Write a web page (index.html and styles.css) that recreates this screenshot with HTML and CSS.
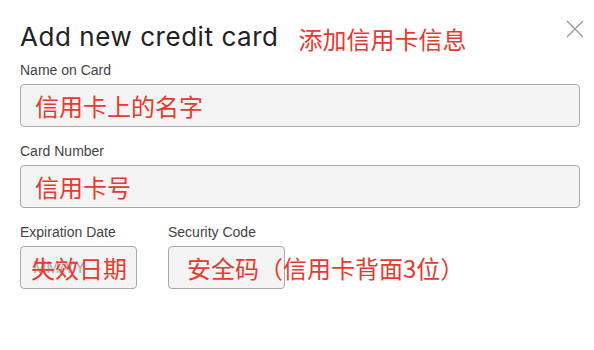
FILE: index.html
```html
<!DOCTYPE html>
<html lang="zh">
<head>
	<meta charset="UTF-8">
	<title>Add new credit card</title>
	<link rel="stylesheet" href="styles.css">
</head>
<body>
	<div class="modal">
		<div class="modal-header">
			<h2>Add new credit card</h2>
			<span class="note note-title">添加信用卡信息</span>
			<button class="close" aria-label="Close">
				<svg width="18" height="18" viewBox="0 0 18 18"><path d="M1 1L17 17M17 1L1 17" stroke="#9a9a9a" stroke-width="1.3" fill="none"/></svg>
			</button>
		</div>
		<div class="field">
			<label>Name on Card</label>
			<div class="input-wrap">
				<input type="text">
				<span class="note">信用卡上的名字</span>
			</div>
		</div>
		<div class="field">
			<label>Card Number</label>
			<div class="input-wrap">
				<input type="text">
				<span class="note">信用卡号</span>
			</div>
		</div>
		<div class="field-row">
			<div class="field small">
				<label>Expiration Date</label>
				<div class="input-wrap">
					<input type="text" placeholder="MM/YY">
					<span class="note note-exp">失效日期</span>
				</div>
			</div>
			<div class="field small">
				<label>Security Code</label>
				<div class="input-wrap">
					<input type="text">
					<span class="note note-cvc">安全码（信用卡背面3位）</span>
				</div>
			</div>
		</div>
	</div>
</body>
</html>
```

FILE: styles.css
```css
body {
	margin: 0;
	background: #fff;
	font-family: "Liberation Sans", Arial, sans-serif;
}
.modal {
	padding: 18px 10px 0 20px;
}
.modal-header {
	display: flex;
	align-items: center;
	height: 36px;
	margin-bottom: 8px;
}
.modal-header h2 {
	margin: 0;
	font-family: Inter, "Noto Sans", sans-serif;
	font-weight: 400;
	font-size: 26px;
	color: #222;
	letter-spacing: 0.55px;
}
.note {
	font-family: "Noto Sans CJK SC", sans-serif;
	font-size: 24px;
	color: #e8392f;
	white-space: nowrap;
}
.note-title {
	margin-left: 20px;
	margin-top: 4px;
}
.close {
	margin-left: auto;
	align-self: flex-start;
	margin-top: 2px;
	margin-right: 0;
	border: none;
	background: none;
	padding: 0;
	width: 18px;
	height: 18px;
}
.field {
	margin-bottom: 16px;
}
.field label {
	display: block;
	font-size: 14px;
	color: #444;
	line-height: 16px;
	margin-bottom: 6px;
}
.input-wrap {
	position: relative;
}
.input-wrap input {
	box-sizing: border-box;
	width: 560px;
	height: 43px;
	border: 1px solid #a9a9a9;
	border-radius: 4px;
	background: #f4f4f4;
	padding: 0 12px;
	font-family: "Liberation Sans", Arial, sans-serif;
	font-size: 16px;
}
.input-wrap input::placeholder {
	color: #a8a8a8;
}
.input-wrap .note {
	position: absolute;
	left: 15px;
	top: 4px;
	pointer-events: none;
}
.field-row {
	display: flex;
	gap: 31px;
}
.field.small input {
	width: 117px;
}
.input-wrap .note-exp {
	left: 11px;
}
.input-wrap .note-cvc {
	left: 19px;
}
```
